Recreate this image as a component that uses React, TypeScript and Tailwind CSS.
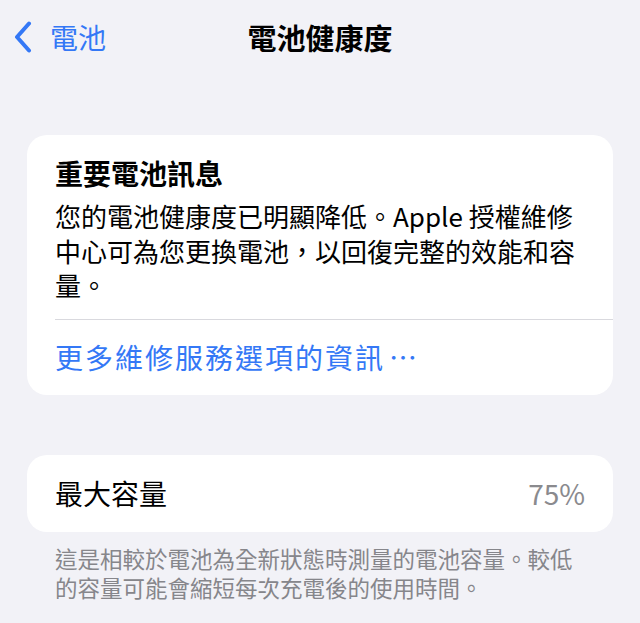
import React from "react";

const font = { fontFamily: '"Noto Sans CJK TC", "Noto Sans", sans-serif' };

export default function App() {
  return (
    <div className="w-[640px] h-[623px] bg-[#f2f2f7] overflow-hidden" style={font}>
      <div className="grid grid-cols-[1fr_auto_1fr] items-center h-[74px]">
        <div className="flex items-center pl-[14px] gap-[18px] text-[#3478f6]">
          <svg width="18" height="32" viewBox="0 0 18 32" fill="none">
            <path d="M15 2.5 L3 16 L15 29.5" stroke="#3478f6" strokeWidth="4" strokeLinecap="round" strokeLinejoin="round" />
          </svg>
          <span className="text-[28px] leading-none">電池</span>
        </div>
        <div className="text-[29px] font-bold leading-none text-black">電池健康度</div>
        <div />
      </div>

      <div className="mt-[61px] mx-[27px] bg-white rounded-[20px]">
        <div className="pl-[28px] pr-[24px] pt-[20px] pb-[16px]">
          <div className="text-[28px] font-bold leading-[36px] text-black">重要電池訊息</div>
          <div className="mt-[8px] text-[26px] leading-[34.5px] text-black">
            您的電池健康度已明顯降低。Apple 授權維修中心可為您更換電池，以回復完整的效能和容量。
          </div>
        </div>
        <div className="ml-[28px] h-px bg-[#d9d9de]" />
        <div className="pl-[28px] h-[75px] flex items-center text-[28px] tracking-[2px] text-[#3478f6] leading-none">
          更多維修服務選項的資訊<span className="ml-[4px] tracking-normal">⋯</span>
        </div>
      </div>

      <div className="mt-[60px] mx-[27px] bg-white rounded-[20px] h-[77px] flex items-center justify-between pl-[28px] pr-[28px]">
        <span className="text-[28px] text-black leading-none">最大容量</span>
        <span className="text-[28px] text-[#8a8a8e] leading-none">75%</span>
      </div>

      <div className="mx-[55px] mt-[12px] text-[22.5px] leading-[29px] text-[#86868b]">
        這是相較於電池為全新狀態時測量的電池容量。較低的容量可能會縮短每次充電後的使用時間。
      </div>
    </div>
  );
}
